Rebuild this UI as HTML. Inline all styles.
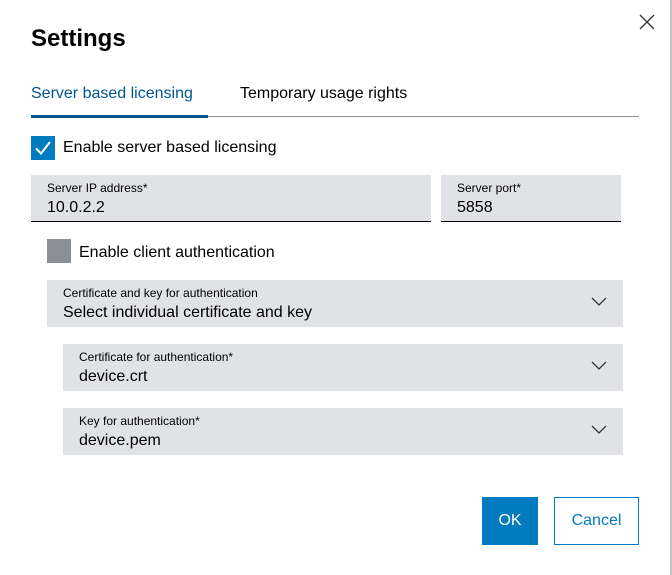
<!DOCTYPE html>
<html><head><style>
*{margin:0;padding:0;box-sizing:border-box}
body{width:672px;height:575px;background:#fff;font-family:"Liberation Sans",sans-serif;position:relative;overflow:hidden;color:#000}
.a{position:absolute}
.f{position:absolute;background:#e0e2e5}
.lab{position:absolute;font-size:12px;color:#000}
.val{position:absolute;font-size:16px;color:#000}
.chev{position:absolute;right:16px;top:17px}
</style></head><body>
<div class="a" style="left:670px;top:0;width:2px;height:575px;background:#c1c5c9"></div>
<svg class="a" style="left:639px;top:14px" width="16" height="16"><path d="M1 1L15 15M15 1L1 15" stroke="#333" stroke-width="1.3" fill="none"/></svg>
<div class="a" style="left:31px;top:25px;font-size:24px;font-weight:bold">Settings</div>
<div class="a" style="left:31px;top:85px;font-size:16px;color:#005691">Server based licensing</div>
<div class="a" style="left:240px;top:85px;font-size:16px">Temporary usage rights</div>
<div class="a" style="left:31px;top:116px;width:608px;height:1px;background:#8a9097"></div>
<div class="a" style="left:31px;top:115px;width:177px;height:3px;background:#005691"></div>
<div class="a" style="left:31px;top:136px;width:24px;height:24px;background:#007bc0"></div>
<svg class="a" style="left:31px;top:136px" width="24" height="24"><path d="M5 12.5L10 17.5L19 6" stroke="#fff" stroke-width="2" fill="none"/></svg>
<div class="a" style="left:63px;top:139px;font-size:16px">Enable server based licensing</div>
<div class="f" style="left:31px;top:175px;width:400px;height:47px;border-bottom:1px solid #000"><div class="lab" style="left:16px;top:6px">Server IP address*</div><div class="val" style="left:16px;top:24px">10.0.2.2</div></div>
<div class="f" style="left:441px;top:175px;width:180px;height:47px;border-bottom:1px solid #000"><div class="lab" style="left:16px;top:6px">Server port*</div><div class="val" style="left:16px;top:24px">5858</div></div>
<div class="a" style="left:47px;top:239px;width:24px;height:24px;background:#8a9097"></div>
<div class="a" style="left:79px;top:244px;font-size:16px">Enable client authentication</div>
<div class="f" style="left:47px;top:280px;width:576px;height:47px"><div class="lab" style="left:16px;top:6px">Certificate and key for authentication</div><div class="val" style="left:16px;top:24px">Select individual certificate and key</div><svg class="chev" width="16" height="10"><path d="M1 1L8 8L15 1" stroke="#333" stroke-width="1.3" fill="none"/></svg></div>
<div class="f" style="left:63px;top:344px;width:560px;height:47px"><div class="lab" style="left:16px;top:6px">Certificate for authentication*</div><div class="val" style="left:16px;top:24px">device.crt</div><svg class="chev" width="16" height="10"><path d="M1 1L8 8L15 1" stroke="#333" stroke-width="1.3" fill="none"/></svg></div>
<div class="f" style="left:63px;top:408px;width:560px;height:47px"><div class="lab" style="left:16px;top:6px">Key for authentication*</div><div class="val" style="left:16px;top:24px">device.pem</div><svg class="chev" width="16" height="10"><path d="M1 1L8 8L15 1" stroke="#333" stroke-width="1.3" fill="none"/></svg></div>
<div class="a" style="left:482px;top:497px;width:56px;height:48px;background:#007bc0;color:#fff;font-size:16px;text-align:center;line-height:48px">OK</div>
<div class="a" style="left:554px;top:497px;width:85px;height:48px;border:1px solid #007bc0;color:#007bc0;font-size:16px;text-align:center;line-height:46px">Cancel</div>
</body></html>
